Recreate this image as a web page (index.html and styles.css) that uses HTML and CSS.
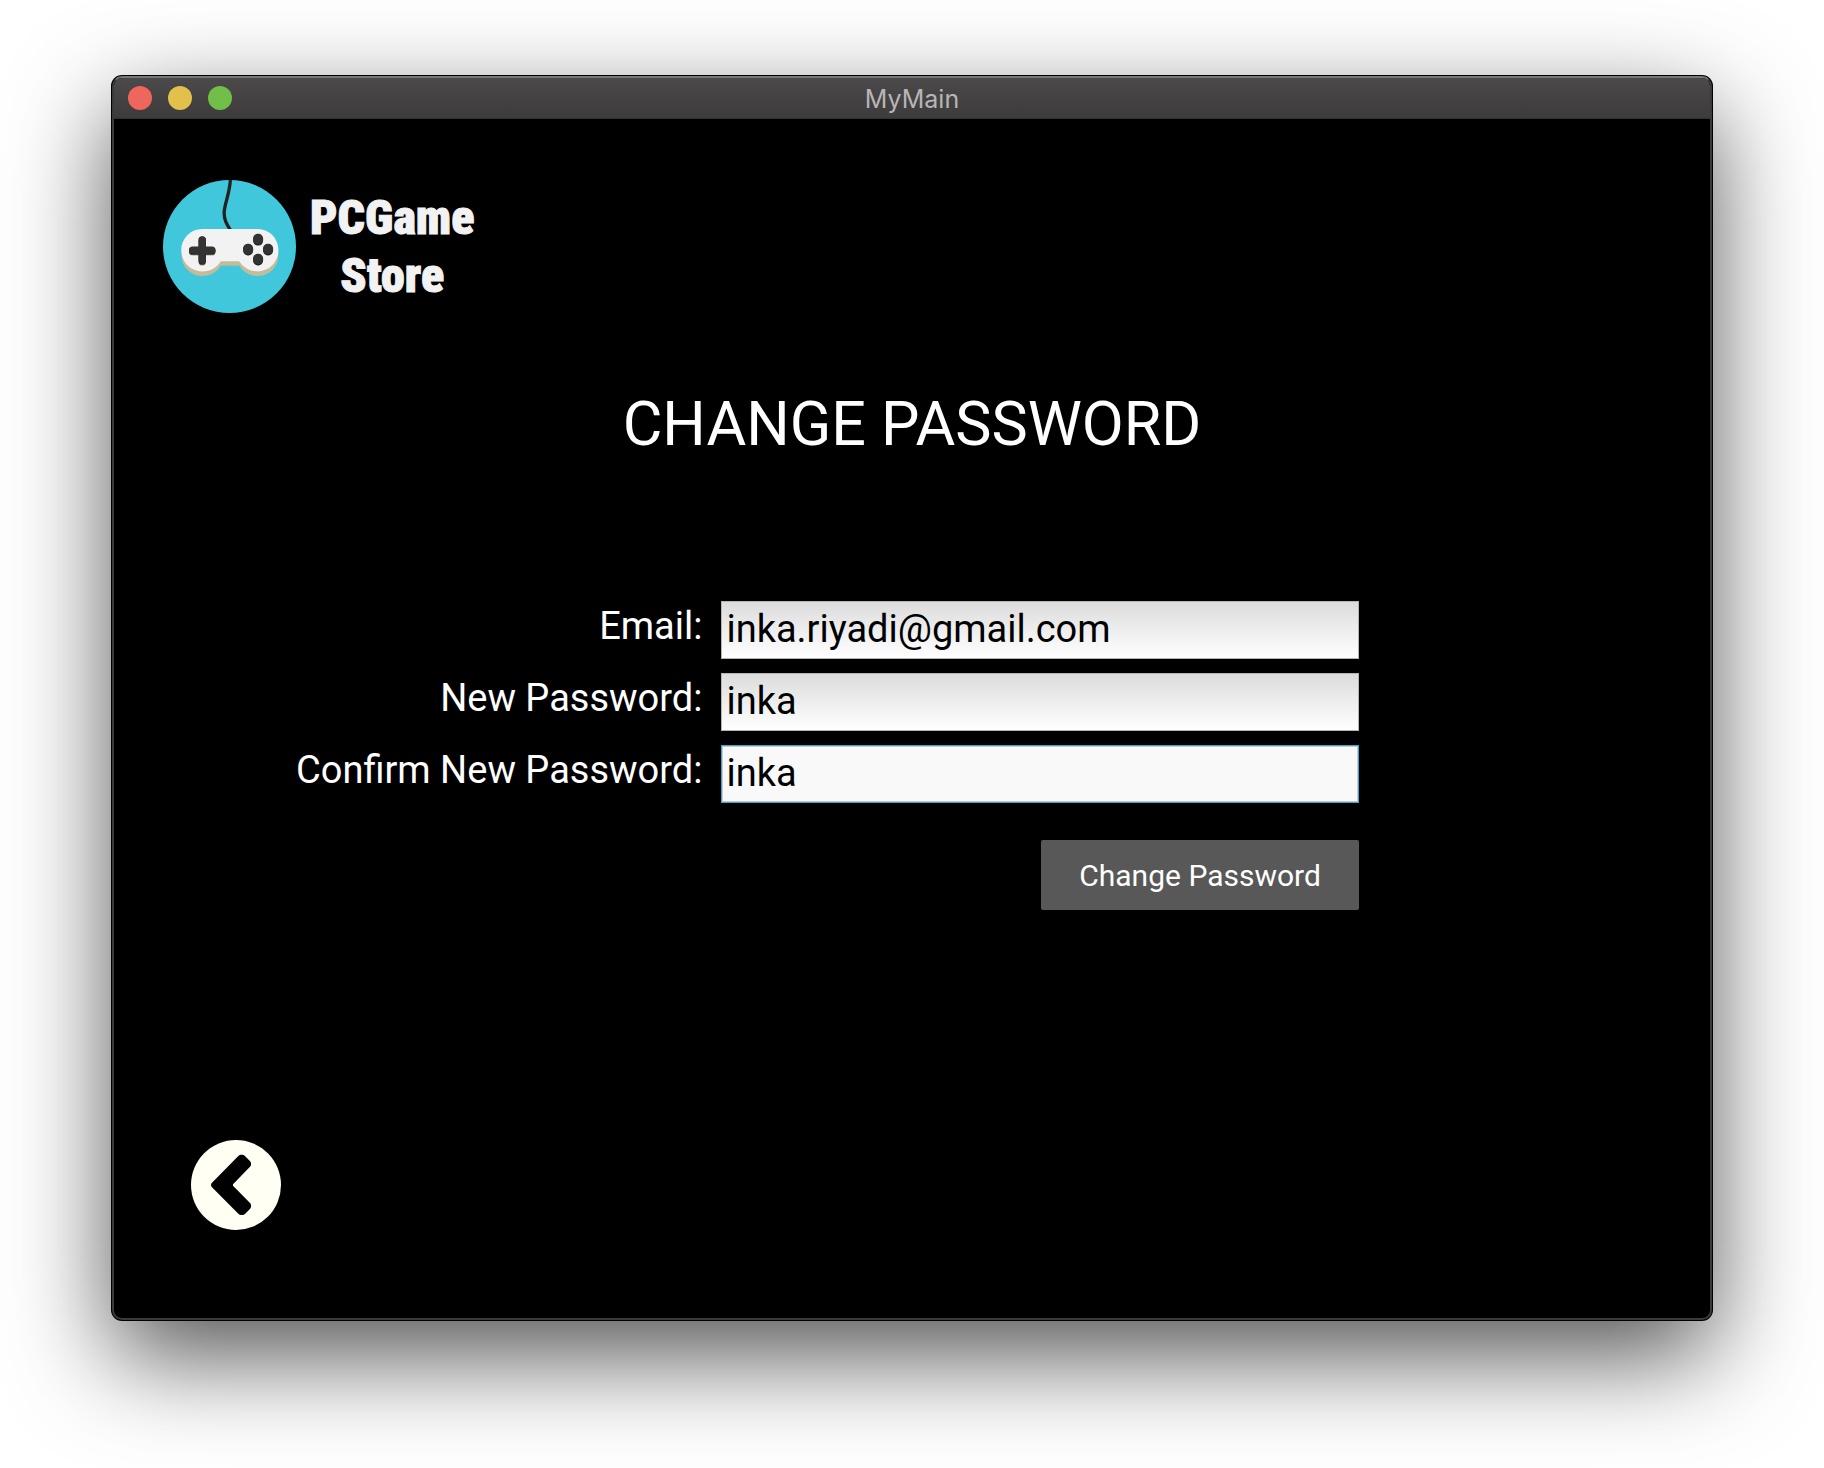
FILE: index.html
```html
<!DOCTYPE html>
<html lang="en">
<head>
<meta charset="utf-8">
<title>MyMain</title>
<link rel="stylesheet" href="styles.css">
</head>
<body>
<div class="window">
  <header class="titlebar">
    <div class="controls">
      <button class="dot dot-close" type="button" aria-label="Close"></button>
      <button class="dot dot-minimize" type="button" aria-label="Minimize"></button>
      <button class="dot dot-zoom" type="button" aria-label="Zoom"></button>
    </div>
    <span class="window-title">MyMain</span>
  </header>
  <main class="content">
    <div class="brand">
      <svg class="brand-mark" viewBox="39 29 400 400" aria-hidden="true">
        <defs><clipPath id="disc"><circle cx="239" cy="229" r="200"/></clipPath></defs>
        <circle cx="239" cy="229" r="200" fill="#40c7db"/>
        <path d="M242 24C240 70 224 100 223 126C222 148 231 162 241 178" fill="none" stroke="#222" stroke-width="10" clip-path="url(#disc)"/>
        <path d="M157 191H325A62 62 0 0 1 386 254A62 62 0 0 1 325 318C300 318 281 306 268 287H213C201 306 182 318 157 318A62 62 0 0 1 95 254A62 62 0 0 1 157 191Z" fill="#c2bc9c"/>
        <path d="M157 176H325A63 63 0 0 1 386 240A63 63 0 0 1 325 304C300 304 281 292 268 273H213C201 292 182 304 157 304A63 63 0 0 1 94 240A63 63 0 0 1 157 176Z" fill="#f2f2f2"/>
        <path d="M157 213V276M128 246H186" stroke="#c2bc9c" stroke-width="22" stroke-linecap="round"/>
        <path d="M157 210V273M128 243H186" stroke="#222" stroke-width="22" stroke-linecap="round"/>
        <path d="M157 209V270M128 240H186" stroke="#333" stroke-width="22" stroke-linecap="round"/>
        <g fill="#222"><rect x="310" y="193" width="30" height="33" rx="14"/><rect x="280" y="223" width="30" height="33" rx="14"/><rect x="340" y="223" width="30" height="33" rx="14"/><rect x="310" y="253" width="30" height="33" rx="14"/></g>
        <g fill="#333"><rect x="310" y="191" width="30" height="31" rx="14"/><rect x="280" y="221" width="30" height="31" rx="14"/><rect x="340" y="221" width="30" height="31" rx="14"/><rect x="310" y="251" width="30" height="31" rx="14"/></g>
      </svg>
      <div class="brand-name">PCGame<br>Store</div>
    </div>
    <h1 class="heading">CHANGE PASSWORD</h1>
    <form class="form">
      <label class="label" for="email">Email:</label>
      <input class="field" id="email" type="text" value="inka.riyadi@gmail.com">
      <label class="label" for="new-password">New Password:</label>
      <input class="field" id="new-password" type="text" value="inka">
      <label class="label" for="confirm-password">Confirm New Password:</label>
      <input class="field field-active" id="confirm-password" type="text" value="inka">
      <button class="submit" type="button">Change Password</button>
    </form>
    <button class="back" type="button" aria-label="Back">
      <svg class="back-icon" viewBox="63 60 270 270" aria-hidden="true">
        <circle cx="198" cy="195" r="135" fill="#fffff4"/>
        <path d="M213 104H217Q221 104 224 107L239 122Q243 126 243 130V134Q243 137 240 140L189 193V197L240 249Q243 252 243 256V260Q243 264 239 268L225 282Q221 285 217 285H213Q209 285 205 281L126 202Q123 199 123 195Q123 191 126 188L205 108Q209 104 213 104Z" fill="#000"/>
      </svg>
    </button>
  </main>
</div>
</body>
</html>
```
FILE: styles.css
```css
* {
  box-sizing: border-box;
}

body {
  margin: 0;
  min-height: 100vh;
  display: flex;
  padding: 76px 112px 148px;
  background: #fff;
  font-family: Roboto, sans-serif;
  overflow-x: hidden;
}

.window {
  flex: 1;
  display: flex;
  flex-direction: column;
  overflow: hidden;
  border: 2px solid #3a3a3a;
  border-top-color: #777;
  border-radius: 10px;
  background: #000;
  box-shadow: 0 0 0 1px #000, 0 36px 100px rgba(0, 0, 0, 0.68);
}

.titlebar {
  display: grid;
  grid-template-columns: 1fr auto 1fr;
  align-items: center;
  height: 41px;
  padding: 0 14px;
  border-bottom: 1px solid #323031;
  background: linear-gradient(#4b494a, #3d3b3c);
}

.controls {
  display: flex;
  gap: 16px;
}

.dot {
  width: 24px;
  height: 24px;
  padding: 0;
  border: 0;
  border-radius: 50%;
}

.dot-close {
  background: #ee665c;
}

.dot-minimize {
  background: #e1c04c;
}

.dot-zoom {
  background: #71bf49;
}

.window-title {
  padding-top: 2px;
  color: #b7b6b6;
  font-family: Inter, sans-serif;
  font-size: 25px;
  line-height: 32px;
}

.content {
  flex: 1;
  display: flex;
  flex-direction: column;
  padding: 61px 0 88px;
}

.brand {
  display: flex;
  align-items: center;
  gap: 14px;
  padding-left: 49px;
}

.brand-mark {
  width: 133px;
  height: 133px;
}

.brand-name {
  color: #f2f2f2;
  font-family: Impact, "Roboto Condensed", Roboto, sans-serif;
  font-size: 48px;
  font-weight: 900;
  line-height: 58px;
  text-align: center;
  -webkit-text-stroke: 1px #f2f2f2;
}

.heading {
  margin: 76px 0 0;
  color: #fff;
  font-size: 61px;
  font-weight: 400;
  line-height: 70px;
  text-align: center;
}

.form {
  display: grid;
  grid-template-columns: 48fr 52fr;
  column-gap: 19px;
  row-gap: 14px;
  margin-top: 142px;
  padding-right: 22%;
}

.label {
  color: #fff;
  font-size: 38px;
  line-height: 50px;
  text-align: right;
}

.field {
  width: 100%;
  height: 58px;
  padding: 0 4px 2px;
  border: 1px solid #b4b4b4;
  border-radius: 0;
  background: linear-gradient(#dcdcdc, #fff);
  color: #000;
  font-family: inherit;
  font-size: 38px;
  outline: 0;
}

.field-active {
  border-color: #3fa3d1;
  background: #f9f9f9;
  box-shadow: inset 0 0 0 1px #c3cdca;
}

.submit {
  grid-column: 2;
  justify-self: end;
  height: 70px;
  margin-top: 23px;
  padding: 0 38px;
  border: 0;
  border-radius: 2px;
  background: #585858;
  color: #fff;
  font-family: inherit;
  font-size: 30px;
}

.back {
  align-self: flex-start;
  width: 90px;
  height: 90px;
  margin-top: auto;
  margin-left: 77px;
  padding: 0;
  border: 0;
  background: none;
}

.back-icon {
  display: block;
  width: 100%;
  height: 100%;
}
```
